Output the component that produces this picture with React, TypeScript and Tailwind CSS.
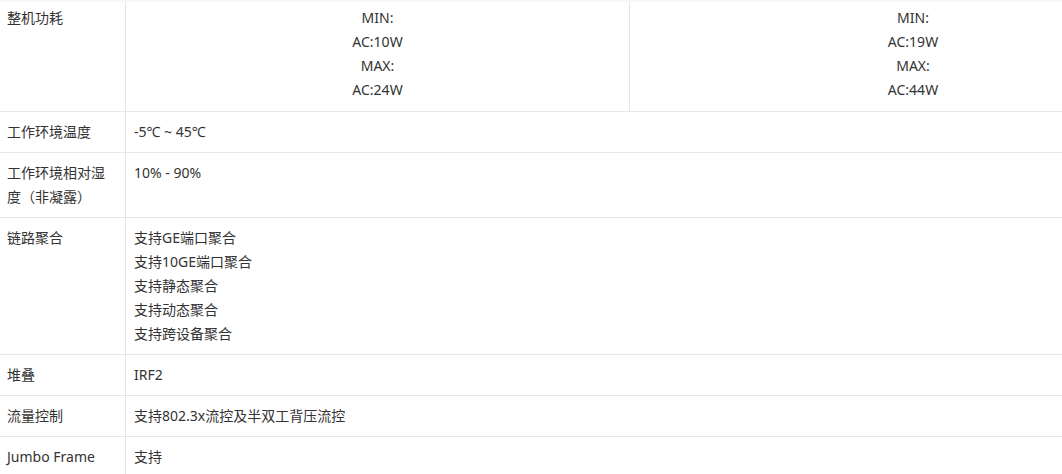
import React from 'react';

interface SpecRow {
  label: string[];
  value: string[];
}

const rows: SpecRow[] = [
  { label: ['工作环境温度'], value: ['-5℃ ~ 45℃'] },
  { label: ['工作环境相对湿', '度（非凝露）'], value: ['10% - 90%'] },
  {
    label: ['链路聚合'],
    value: ['支持GE端口聚合', '支持10GE端口聚合', '支持静态聚合', '支持动态聚合', '支持跨设备聚合'],
  },
  { label: ['堆叠'], value: ['IRF2'] },
  { label: ['流量控制'], value: ['支持802.3x流控及半双工背压流控'] },
  { label: ['Jumbo Frame'], value: ['支持'] },
];

export default function App() {
  return (
    <div
      className="w-[1062px] h-[474px] overflow-hidden bg-white text-[14px] leading-6 text-[#333]"
      style={{ fontFamily: '"Noto Sans", "Noto Sans CJK SC", sans-serif' }}
    >
      <div className="w-[1196px]">
        <div className="h-[2px] bg-[#f7f7f7]" />

        {/* power row: two models */}
        <div className="grid grid-cols-[126px_504px_566px] border-b border-[#e6e6e6]">
          <div className="border-r border-[#e6e6e6] pl-[7px] pt-[4px] pb-[9px]">整机功耗</div>
          <div className="border-r border-[#e6e6e6] pt-[4px] pb-[9px] text-center">
            <div>MIN:</div>
            <div>AC:10W</div>
            <div>MAX:</div>
            <div>AC:24W</div>
          </div>
          <div className="pt-[4px] pb-[9px] text-center">
            <div>MIN:</div>
            <div>AC:19W</div>
            <div>MAX:</div>
            <div>AC:44W</div>
          </div>
        </div>

        {rows.map((row) => (
          <div key={row.label.join('')} className="grid grid-cols-[126px_1070px] border-b border-[#e6e6e6]">
            <div className="border-r border-[#e6e6e6] pl-[7px] py-2">
              {row.label.map((l) => (
                <div key={l}>{l}</div>
              ))}
            </div>
            <div className="pl-2 py-2">
              {row.value.map((v) => (
                <div key={v}>{v}</div>
              ))}
            </div>
          </div>
        ))}
      </div>
    </div>
  );
}
